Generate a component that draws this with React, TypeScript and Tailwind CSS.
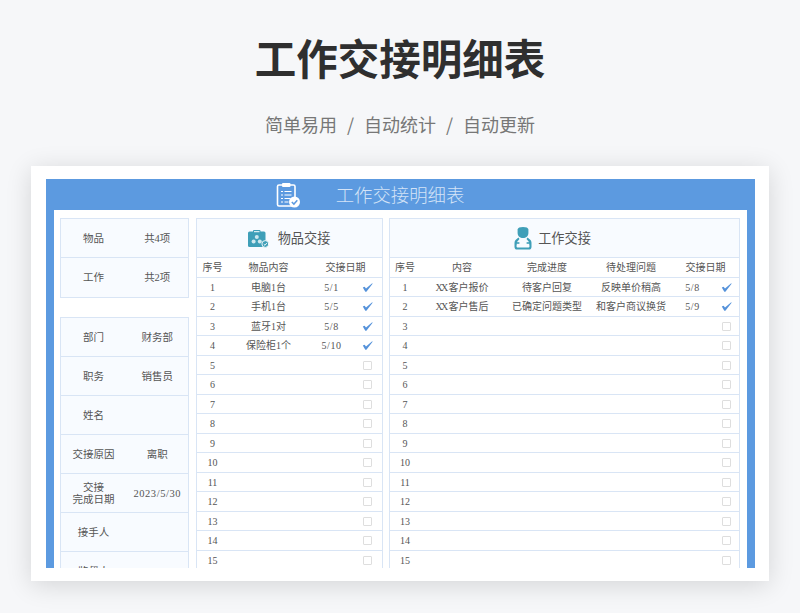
const goods = ["电脑1台", "手机1台", "蓝牙1对", "保险柜1个"];
const goodsDates = ["5/1", "5/5", "5/8", "5/10"];
const work = [
  ["客户报价", "待客户回复", "反映单价稍高", "5/8"],
  ["客户售后", "已确定问题类型", "和客户商议换货", "5/9"],
];
const numbers = Array.from({ length: 15 }, (_, i) => i + 1);

const Tick = () => (
  <svg width="11" height="11" viewBox="0 0 11 11">
    <path d="M0.8 5.6 L2.6 4.8 L4 6.4 L10.2 1.2 L10.6 1.8 L4.4 9.8 L3.3 9.8 Z" fill="#5592da" />
  </svg>
);

const Box = () => <div className="w-[9px] h-[9px] border border-[#dedede] bg-white rounded-[1px]" />;

const ReportIcon = () => (
  <svg width="25" height="26" viewBox="0 0 25 26" className="shrink-0">
    <rect x="1.5" y="3" width="17.5" height="21" rx="1.5" fill="#5c9ae0" stroke="#fff" strokeWidth="1.6" />
    <rect x="6" y="1" width="8.5" height="4" rx="1" fill="#fff" />
    <path d="M5 9.5h2M8.5 9.5h7M5 13h2M8.5 13h7M5 16.5h2M8.5 16.5h6M5 20h2M8.5 20h4" stroke="#fff" strokeWidth="1.2" />
    <circle cx="18.5" cy="20" r="5.5" fill="#fff" />
    <path d="M15.8 20 L17.9 22.1 L21.3 18.3" fill="none" stroke="#5c9ae0" strokeWidth="1.5" />
  </svg>
);

const GoodsIcon = () => (
  <svg width="21" height="18" viewBox="0 0 21 18" className="shrink-0">
    <rect x="0" y="1.5" width="17.5" height="15.5" rx="1.5" fill="#3f9fb8" />
    <rect x="5" y="0" width="7.5" height="3" rx="1" fill="#3f9fb8" />
    <rect x="6" y="1.2" width="5.5" height="1" fill="#fff" />
    <circle cx="8.8" cy="7" r="2" fill="#cfe8ef" />
    <circle cx="5.6" cy="11.5" r="2" fill="#cfe8ef" />
    <circle cx="11.8" cy="11.5" r="2" fill="#cfe8ef" />
    <circle cx="17.3" cy="14" r="3.4" fill="#3f9fb8" stroke="#fff" strokeWidth="0.9" />
    <path d="M15.8 14.2 L17 15.3 L18.8 13" fill="none" stroke="#fff" strokeWidth="0.9" />
  </svg>
);

const PersonIcon = () => (
  <svg width="18" height="23" viewBox="0 0 18 23" className="shrink-0">
    <path d="M3.6 2.5 C3.6 0.8 6 0 9 0 C12 0 14.4 0.8 14.4 2.5 L14.4 6 C14.4 9 12 11 9 11 C6 11 3.6 9 3.6 6 Z" fill="#3f9fb8" />
    <path d="M4.5 10.5 L1.5 13 C0.7 14 0.5 15 0.5 16 L0.5 20 C0.5 21.7 1.6 22.6 3 22.6 L15 22.6 C16.4 22.6 17.5 21.7 17.5 20 L17.5 16 C17.5 15 17.3 14 16.5 13 L13.5 10.5 L12.5 12 L14.8 14.8 L15.5 19 C15.5 20 15 20.6 14 20.6 L4 20.6 C3 20.6 2.5 20 2.5 19 L3.2 14.8 L5.5 12 Z" fill="#3f9fb8" />
    <rect x="2.6" y="15.2" width="2.8" height="1.6" fill="#3f9fb8" />
    <rect x="12.6" y="15.2" width="2.8" height="1.6" fill="#3f9fb8" />
  </svg>
);

const LeftRow = ({ label, value, wide }: { label: React.ReactNode; value?: string; wide?: boolean }) => (
  <div className="h-[39px] shrink-0 grid grid-cols-[66px_1fr] items-center text-center border-b border-[#d9e5f5] last:border-b-0 leading-[12px] text-[10.5px] pt-px">
    <div>{label}</div>
    <div className={wide ? "tracking-[0.55px]" : ""}>{value}</div>
  </div>
);

export default function App() {
  return (
    <div className="w-[800px] h-[613px] overflow-hidden bg-[#f6f7f9] font-['Liberation_Serif','Noto_Sans_CJK_SC',serif] text-[#555] text-[10px]">
      <header className="h-[166px] flex flex-col items-center font-['Noto_Sans_CJK_SC',sans-serif]">
        <h1 className="mt-[27px] text-[41.5px] leading-[60px] font-bold text-[#2f2f2f]">工作交接明细表</h1>
        <p className="mt-[23px] text-[18px] leading-[28px] text-[#777] flex gap-[10px]">
          <span>简单易用</span><span>/</span><span>自动统计</span><span>/</span><span>自动更新</span>
        </p>
      </header>

      <div className="mx-[31px] h-[415px] bg-white px-[14.5px] pt-[13px] shadow-[0_4px_24px_rgba(0,0,0,0.14)]">
        <div className="h-[389px] overflow-hidden bg-[#5c9ae0] px-[8px]">
          <div className="h-[31px] flex items-center justify-center gap-[35px] pr-[60px]">
            <ReportIcon />
            <span className="text-[18.4px] text-[#d3e3f7] font-['Noto_Sans_CJK_SC',serif] font-light">工作交接明细表</span>
          </div>

          <div className="h-[400px] bg-white flex items-start pl-[6px] pt-[8px] gap-[6.5px]">
            {/* left summary */}
            <div className="w-[129.5px] flex flex-col gap-[19px] shrink-0">
              <div className="flex flex-col border border-[#d9e5f5] bg-[#f8fbff]">
                <LeftRow label="物品" value="共4项" />
                <LeftRow label="工作" value="共2项" />
              </div>
              <div className="flex flex-col border border-[#d9e5f5] bg-[#f8fbff]">
                <LeftRow label="部门" value="财务部" />
                <LeftRow label="职务" value="销售员" />
                <LeftRow label="姓名" />
                <LeftRow label="交接原因" value="离职" />
                <LeftRow label={<>交接<br />完成日期</>} value="2023/5/30" wide />
                <LeftRow label="接手人" />
                <LeftRow label="监督人" />
              </div>
            </div>

            {/* goods */}
            <div className="w-[187px] shrink-0 border-x border-t border-[#d9e5f5]">
              <div className="h-[39px] flex items-center justify-center gap-[9px] bg-[#f8fbff] border-b border-[#d9e5f5] text-[13.2px] pt-px">
                <GoodsIcon />
                <span>物品交接</span>
              </div>
              <div className="h-[19.5px] grid grid-cols-[30px_82px_1fr] items-center text-center border-b border-[#d9e5f5] pt-px pl-px">
                <span>序号</span><span>物品内容</span><span>交接日期</span>
              </div>
              {numbers.map((n) => (
                <div key={n} className="h-[19.5px] grid grid-cols-[30px_82px_44px_1fr] items-center text-center border-b border-[#d9e5f5] pt-px pl-px">
                  <span>{n}</span>
                  <span>{goods[n - 1]}</span>
                  <span className="tracking-[0.5px]">{goodsDates[n - 1]}</span>
                  <span className="flex justify-center">{n <= 4 ? <Tick /> : <Box />}</span>
                </div>
              ))}
            </div>

            {/* work */}
            <div className="w-[351px] shrink-0 border-x border-t border-[#d9e5f5]">
              <div className="h-[39px] flex items-center justify-center gap-[6px] bg-[#f8fbff] border-b border-[#d9e5f5] text-[13.2px] pr-[24px] pt-px">
                <PersonIcon />
                <span>工作交接</span>
              </div>
              <div className="h-[19.5px] grid grid-cols-[30px_84px_86px_82px_1fr] items-center text-center border-b border-[#d9e5f5] pt-px">
                <span>序号</span><span>内容</span><span>完成进度</span><span>待处理问题</span><span>交接日期</span>
              </div>
              {numbers.map((n) => {
                const row = work[n - 1];
                return (
                  <div key={n} className="h-[19.5px] grid grid-cols-[30px_84px_86px_82px_41px_1fr] items-center text-center border-b border-[#d9e5f5] pt-px">
                    <span>{n}</span>
                    <span>{row && <><span className="tracking-[-1.8px] pr-[2px]">XX</span>{row[0]}</>}</span>
                    <span>{row?.[1]}</span>
                    <span>{row?.[2]}</span>
                    <span className="tracking-[0.5px]">{row?.[3]}</span>
                    <span className="flex justify-center">{row ? <Tick /> : <Box />}</span>
                  </div>
                );
              })}
            </div>
          </div>
        </div>
      </div>
    </div>
  );
}
